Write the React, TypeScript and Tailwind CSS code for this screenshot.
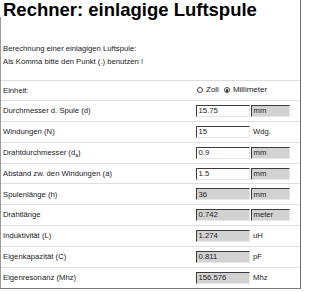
import React from "react";

type Row = {
  label: React.ReactNode;
  value: string;
  readOnly: boolean;
  unit: string;
  unitBox: boolean;
};

const rows: Row[] = [
  { label: "Durchmesser d. Spule (d)", value: "15.75", readOnly: false, unit: "mm", unitBox: true },
  { label: "Windungen (N)", value: "15", readOnly: false, unit: "Wdg.", unitBox: false },
  {
    label: (
      <>
        Drahtdurchmesser (d<sub className="text-[5px] align-baseline relative top-[1.5px]">a</sub>)
      </>
    ),
    value: "0.9",
    readOnly: false,
    unit: "mm",
    unitBox: true,
  },
  { label: "Abstand zw. den Windungen (a)", value: "1.5", readOnly: false, unit: "mm", unitBox: true },
  { label: "Spulenlänge (h)", value: "36", readOnly: true, unit: "mm", unitBox: true },
  { label: "Drahtlänge", value: "0.742", readOnly: true, unit: "meter", unitBox: true },
  { label: "Induktivität (L)", value: "1.274", readOnly: true, unit: "uH", unitBox: false },
  { label: "Eigenkapazität (C)", value: "0.811", readOnly: true, unit: "pF", unitBox: false },
  { label: "Eigenresonanz (Mhz)", value: "156.576", readOnly: true, unit: "Mhz", unitBox: false },
];

function Box({ text, gray, w }: { text: string; gray: boolean; w: string }) {
  return (
    <div
      className={`${w} h-[12px] flex items-center pl-[1.5px] border-t border-l border-t-[#3c3c3c] border-l-[#3c3c3c] border-b border-r border-b-[#e6e6e6] border-r-[#e6e6e6] ${
        gray ? "bg-[#d2d2d2]" : "bg-white"
      } text-[#222] leading-none`}
    >
      {text}
    </div>
  );
}

export default function App() {
  return (
    <div
      className="w-[302px] h-[292px] bg-white text-[#1a1a1a] overflow-hidden"
      style={{ fontFamily: '"Liberation Sans", Arial, sans-serif' }}
    >
      <div className="w-[301px] h-[289px] border-r border-r-[#6e6e6e] border-b border-b-[#7a7a7a] relative">
        <h1 className="text-[18.5px] leading-[18.5px] font-bold text-black pl-[3px] pt-[1px] m-0">
          Rechner: einlagige Luftspule
        </h1>
        <div className="absolute left-0 top-[17px] bottom-0 w-px bg-[#9a9a9a]" />
        <div className="text-[7.7px] leading-[13.3px] pl-[3px] pt-[22px] h-[60px]">
          <div>Berechnung einer einlagigen Luftspule:</div>
          <div>Als Komma bitte den Punkt (.) benutzen !</div>
        </div>
        <div className="text-[7.7px]">
          <div className="h-[20.8px] border-t border-[#dedede] flex items-center pl-[3px]">
            <div className="w-[194px] shrink-0">Einheit:</div>
            <div className="flex items-center">
              <span className="w-[6px] h-[6px] rounded-full border border-[#444] bg-white mr-[3px]" />
              <span className="mr-[5px] text-[8px]">Zoll</span>
              <span className="w-[6px] h-[6px] rounded-full border border-[#444] bg-white mr-[3px] flex items-center justify-center">
                <span className="w-[2.5px] h-[2.5px] rounded-full bg-[#222]" />
              </span>
              <span className="text-[8px]">Millimeter</span>
            </div>
          </div>
          {rows.map((r, i) => (
            <div key={i} className="h-[20.8px] border-t border-[#dedede] flex items-center pl-[3px]">
              <div className="w-[193px] shrink-0">{r.label}</div>
              <Box text={r.value} gray={r.readOnly} w="w-[54px]" />
              {r.unitBox ? (
                <div className="ml-[1px]">
                  <Box text={r.unit} gray={true} w="w-[39px]" />
                </div>
              ) : (
                <div className="ml-[3px]">{r.unit}</div>
              )}
            </div>
          ))}
        </div>
      </div>
    </div>
  );
}
